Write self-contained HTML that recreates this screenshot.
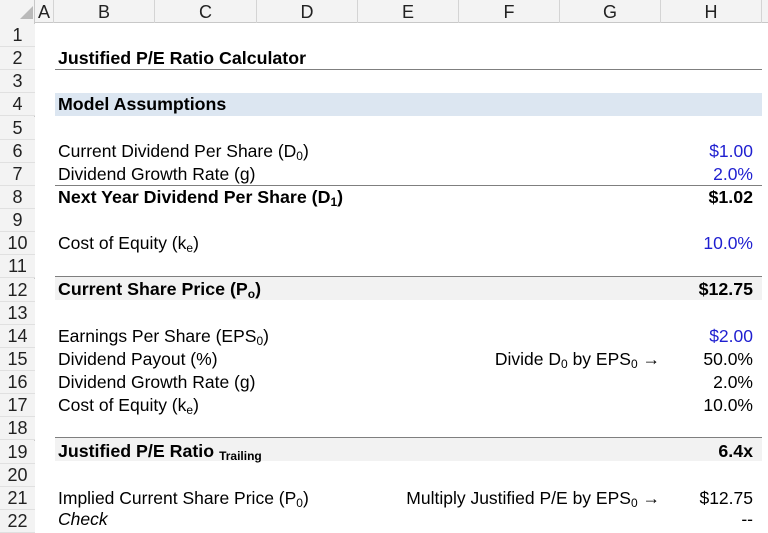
<!DOCTYPE html>
<html><head><meta charset="utf-8"><style>
*{margin:0;padding:0;box-sizing:border-box}
body{width:768px;height:533px;background:#fff;position:relative;overflow:hidden;font-family:"Liberation Sans",Arial,sans-serif;font-size:17.5px;color:#000}
.hd{position:absolute;background:#f3f3f3}
.ch{position:absolute;top:0;height:23px;line-height:24px;text-align:center;color:#222;font-size:18px;border-right:1px solid #d4d4d4}
.rh{position:absolute;left:0;width:35px;height:23px;line-height:23px;text-align:center;color:#222;font-size:18px;border-bottom:1px solid #e0e0e0;background:#f3f3f3}
.t{position:absolute;height:23px;line-height:23px;white-space:nowrap}
.l{left:58px}
.r{right:15px;text-align:right}
.g{right:108px;text-align:right}
.b{font-weight:bold;font-size:17.8px}
.blue{color:#1f1fd0}
.fill{position:absolute;left:55px;width:707px;height:23px}
.ln{position:absolute;left:55px;width:707px;height:1px;background:#7f7f7f}
sub{font-size:12px;vertical-align:-3px;line-height:0}
</style></head><body>
<div class="hd" style="left:0;top:0;width:768px;height:23px;border-bottom:1px solid #c8c8c8"></div>
<div class="hd" style="left:0;top:0;width:35px;height:533px;border-right:1px solid #c8c8c8"></div>
<svg style="position:absolute;left:20px;top:6px" width="13" height="13"><polygon points="13,0 13,13 0,13" fill="#b9b9b9"/></svg>
<div class="ch" style="left:35px;width:19px">A</div>
<div class="ch" style="left:54px;width:101px">B</div>
<div class="ch" style="left:155px;width:102px">C</div>
<div class="ch" style="left:257px;width:101px">D</div>
<div class="ch" style="left:358px;width:101px">E</div>
<div class="ch" style="left:459px;width:101px">F</div>
<div class="ch" style="left:560px;width:101px">G</div>
<div class="ch" style="left:661px;width:101px">H</div>

<div class="rh" style="top:24px">1</div><div class="rh" style="top:47px">2</div><div class="rh" style="top:70px">3</div><div class="rh" style="top:93px">4</div><div class="rh" style="top:117px">5</div><div class="rh" style="top:140px">6</div><div class="rh" style="top:163px">7</div><div class="rh" style="top:186px">8</div><div class="rh" style="top:209px">9</div><div class="rh" style="top:232px">10</div><div class="rh" style="top:255px">11</div><div class="rh" style="top:279px">12</div><div class="rh" style="top:302px">13</div><div class="rh" style="top:325px">14</div><div class="rh" style="top:348px">15</div><div class="rh" style="top:371px">16</div><div class="rh" style="top:394px">17</div><div class="rh" style="top:417px">18</div><div class="rh" style="top:441px">19</div><div class="rh" style="top:464px">20</div><div class="rh" style="top:487px">21</div><div class="rh" style="top:510px">22</div>

<div class="fill" style="top:93px;background:#dce6f1"></div>
<div class="fill" style="top:277px;background:#f2f2f2"></div>
<div class="fill" style="top:438px;background:#f2f2f2"></div>
<div class="ln" style="top:69px"></div>
<div class="ln" style="top:185px"></div>
<div class="ln" style="top:276px"></div>
<div class="ln" style="top:437px"></div>

<div class="t l b" style="top:47px">Justified P/E Ratio Calculator</div>
<div class="t l b" style="top:93px">Model Assumptions</div>
<div class="t l" style="top:140px">Current Dividend Per Share (D<sub>0</sub>)</div>
<div class="t r blue" style="top:140px">$1.00</div>
<div class="t l" style="top:163px">Dividend Growth Rate (g)</div>
<div class="t r blue" style="top:163px">2.0%</div>
<div class="t l b" style="top:186px">Next Year Dividend Per Share (D<sub>1</sub>)</div>
<div class="t r b" style="top:186px">$1.02</div>
<div class="t l" style="top:232px">Cost of Equity (k<sub>e</sub>)</div>
<div class="t r blue" style="top:232px">10.0%</div>
<div class="t l b" style="top:278px">Current Share Price (P<sub>o</sub>)</div>
<div class="t r b" style="top:278px">$12.75</div>
<div class="t l" style="top:325px">Earnings Per Share (EPS<sub>0</sub>)</div>
<div class="t r blue" style="top:325px">$2.00</div>
<div class="t l" style="top:348px">Dividend Payout (%)</div>
<div class="t g" style="top:348px">Divide D<sub>0</sub> by EPS<sub>0</sub> →</div>
<div class="t r" style="top:348px">50.0%</div>
<div class="t l" style="top:371px">Dividend Growth Rate (g)</div>
<div class="t r" style="top:371px">2.0%</div>
<div class="t l" style="top:394px">Cost of Equity (k<sub>e</sub>)</div>
<div class="t r" style="top:394px">10.0%</div>
<div class="t l b" style="top:440px">Justified P/E Ratio <sub>Trailing</sub></div>
<div class="t r b" style="top:440px">6.4x</div>
<div class="t l" style="top:487px">Implied Current Share Price (P<sub>0</sub>)</div>
<div class="t g" style="top:487px">Multiply Justified P/E by EPS<sub>0</sub> →</div>
<div class="t r" style="top:487px">$12.75</div>
<div class="t l" style="top:508px;font-style:italic">Check</div>
<div class="t r" style="top:508px">--</div>
</body></html>
